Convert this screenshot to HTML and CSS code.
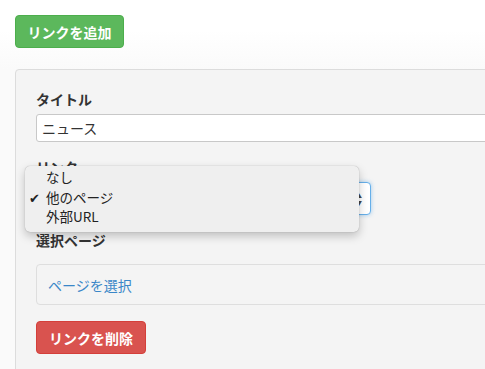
FILE: index.html
```html
<!DOCTYPE html>
<html lang="ja">
<head>
    <meta charset="UTF-8">
    <meta name="viewport" content="width=device-width, initial-scale=1.0">
    <title>リンク設定</title>
    <link rel="stylesheet" href="styles.css">
</head>
<body>

    <button class="btn btn-add">リンクを追加</button>

    <div class="panel">
        <div class="form-group">
            <label class="label">タイトル</label>
            <div class="text-input">ニュース</div>
        </div>

        <div class="form-group">
            <label class="label">リンク</label>
            <div class="select-wrap">
                <div class="select-box">
                    <span>他のページ</span>
                    <span class="arrows">&#9650;<br>&#9660;</span>
                </div>
                <!-- 開いているドロップダウン -->
                <ul class="menu">
                    <li>なし</li>
                    <li class="checked">他のページ</li>
                    <li>外部URL</li>
                </ul>
            </div>
        </div>

        <div class="form-group">
            <label class="label label-page">選択ページ</label>
            <div class="well"><a href="#" class="page-link">ページを選択</a></div>
        </div>

        <button class="btn btn-delete">リンクを削除</button>
    </div>

</body>
</html>
```

FILE: styles.css
```css
html, body {
    margin: 0;
    height: 100%;
    overflow: hidden;
}

body {
    padding: 15px;
    box-sizing: border-box;
    background: linear-gradient(#ffffff 30px, #fafafa 69px);
    color: #333;
    font-family: "Noto Sans CJK JP", "Liberation Sans", sans-serif;
    font-size: 14px;
}

.btn {
    display: block;
    height: 33px;
    padding: 0;
    font-family: inherit;
    font-size: 14px;
    font-weight: bold;
    color: white;
    white-space: nowrap;
    text-align: center;
    border-radius: 4px;
    border: 1px solid transparent;
    cursor: pointer;
}

.btn-add {
    width: 109px;
    background: #5cb85c;
    border-color: #4cae4c;
}

.btn-delete {
    width: 110px;
    margin-top: 16px;
    background: #d9534f;
    border-color: #d43f3a;
}

.panel {
    margin-top: 21px;
    width: 520px;
    height: 400px;
    padding: 19px 20px;
    box-sizing: border-box;
    background: #f4f4f4;
    border: 1px solid #dcdcdc;
    border-radius: 4px;
}

.form-group { margin-bottom: 15px; }

.label {
    display: block;
    height: 20px;
    line-height: 20px;
    margin-bottom: 5px;
    font-weight: bold;
    color: #333;
}

.label-page { margin-bottom: 14px; }

.text-input {
    height: 28px;
    line-height: 26px;
    padding: 0 5px;
    box-sizing: border-box;
    background: white;
    border: 1px solid #c8c8c8;
    border-radius: 3px;
    color: #333;
}

.select-wrap { position: relative; }

.select-box {
    width: 335px;
    height: 33px;
    padding: 0 8px;
    box-sizing: border-box;
    display: flex;
    align-items: center;
    justify-content: space-between;
    background: white;
    border: 1px solid #66afe9;
    border-radius: 4px;
    box-shadow: 0 0 4px rgba(102, 175, 233, 0.6);
}

.arrows {
    font-size: 6px;
    line-height: 7px;
    color: #444;
}

.menu {
    position: absolute;
    left: -11px;
    top: -16px;
    width: 334px;
    height: 66px;
    margin: 0;
    padding: 2px 0 0;
    box-sizing: border-box;
    list-style: none;
    background: #efefef;
    border-radius: 5px;
    box-shadow: 0 0 1px rgba(0, 0, 0, 0.35), 0 4px 10px rgba(0, 0, 0, 0.22);
}

.menu li {
    height: 19.5px;
    line-height: 19.5px;
    padding-left: 21px;
    position: relative;
    color: #222;
    font-size: 13.5px;
}

.menu li.checked::before {
    content: "✔";
    position: absolute;
    left: 4px;
    font-size: 13px;
    color: #222;
}

.well {
    height: 41px;
    padding: 0 11px;
    box-sizing: border-box;
    display: flex;
    align-items: center;
    border: 1px solid #dedede;
    border-radius: 4px;
    background: #f4f4f4;
}

.page-link {
    color: #3a87c8;
    text-decoration: none;
}
```
